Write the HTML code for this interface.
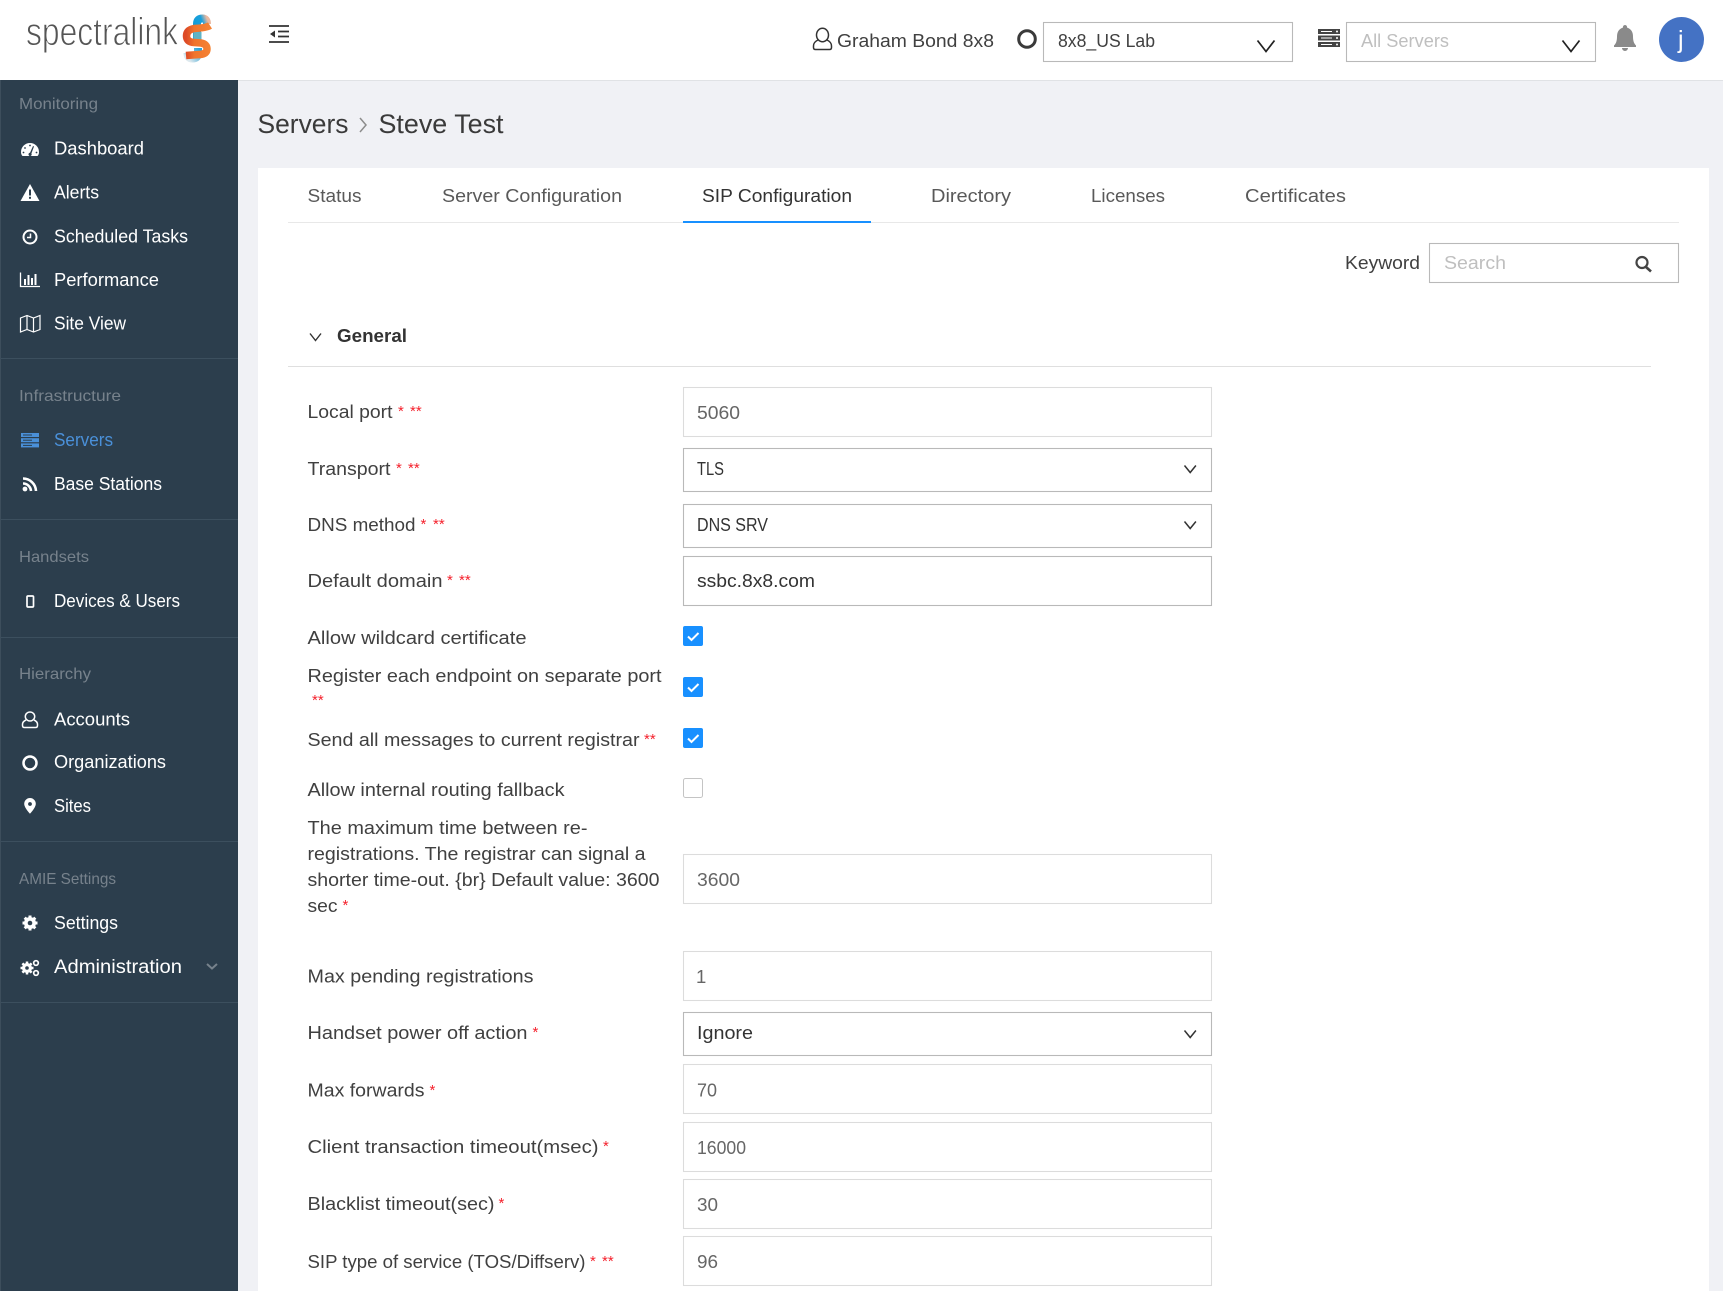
<!DOCTYPE html>
<html lang="en"><head><meta charset="utf-8"><title>Spectralink</title>
<style>
html,body{margin:0;padding:0;background:#f0f1f5;width:1723px;height:1291px;overflow:hidden}
svg{display:block}
text{font-family:"Liberation Sans",sans-serif;font-size:18.5px;fill:#404040}
.n{fill:#fff;font-size:18px}
.h{fill:#77828c;font-size:16px}
.t{fill:#595959;font-size:18.5px}
.v{fill:#666;font-size:18.5px}
.d{fill:#333;font-size:18.5px}
.u{fill:#333;font-size:18px}
.s{fill:#f5222d;font-size:15px}
.b{fill:#fff;stroke:#dcdcdc;stroke-width:1.1}
.c{fill:#fff;stroke:#b9b9b9;stroke-width:1.1}
.l{stroke:#3c4f5e;stroke-width:1}
.ck{fill:#1890ff}
.cv{fill:none;stroke:#333;stroke-width:1.5}
</style></head><body>
<svg width="1723" height="1291" viewBox="0 0 1723 1291" xmlns="http://www.w3.org/2000/svg">
<defs>
<linearGradient id="g1" x1="0" y1="1" x2="1" y2="0"><stop offset="0" stop-color="#0f9ad6"/><stop offset=".7" stop-color="#19a0dc"/><stop offset="1" stop-color="#eab9a0"/></linearGradient>
<linearGradient id="g2" x1="1" y1="0" x2="0" y2="1"><stop offset="0" stop-color="#2aa3d8"/><stop offset=".6" stop-color="#8ec8e2"/><stop offset="1" stop-color="#dde9ee"/></linearGradient>
<linearGradient id="g3" x1="0" y1="0" x2="1" y2="0"><stop offset="0" stop-color="#dd4a26"/><stop offset=".35" stop-color="#f0742c"/><stop offset="1" stop-color="#f58233"/></linearGradient>
</defs>
<rect width="1723" height="1291" fill="#f0f1f5"/>
<!-- header -->
<rect width="1723" height="80" fill="#fff"/>
<rect y="80" width="1723" height="1" fill="#e0e2e5"/>
<!-- logo -->
<text x="26" y="45" textLength="152" lengthAdjust="spacingAndGlyphs" style="font-size:39px;fill:#555;stroke:#fff;stroke-width:.95">spectralink</text>
<g fill="none">
<path d="M197 44 V24 Q197 18.500 202.500 18.500 Q207 18.500 207 24" stroke="url(#g1)" stroke-width="8"/>
<path d="M198 48 V53 Q198 58.500 192.500 58.500 Q187.500 58.500 187.500 53" stroke="url(#g2)" stroke-width="8"/>
<rect x="193.500" y="32" width="8" height="13" fill="#5fb3c4" stroke="none"/>
<path d="M210 25.500 Q206 28 194 28.500 Q186.500 30 186.500 36 Q186.500 42 194 42.500 L201 43 Q207 44 207 49 Q207 54 200 54.500 Q192 55 186 55.500" stroke="url(#g3)" stroke-width="7.500"/>
</g>
<!-- collapse icon -->
<g fill="none" stroke="#333" stroke-width="1.7"><path d="M269 26H289M278 31.500H289M278 36.500H289M269 42H289"/></g><path d="M270 34l5-3.500v7z" fill="#333"/>
<!-- user -->
<g fill="none" stroke="#333" stroke-width="1.500"><ellipse cx="822.500" cy="35" rx="6" ry="6.800"/><path d="M818 40q-4.500 2-4.500 6v1.500q0 2 2 2h14q2 0 2-2v-1.500q0-4-4.500-6"/></g>
<text x="837" y="47" textLength="157" lengthAdjust="spacingAndGlyphs">Graham Bond 8x8</text>
<circle cx="1027" cy="39" r="8.300" fill="none" stroke="#3a3a3a" stroke-width="3"/>
<rect class="c" x="1043.500" y="22.500" width="249" height="39"/>
<text x="1058" y="47" textLength="97" lengthAdjust="spacingAndGlyphs">8x8_US Lab</text>
<path d="M1257.500 40.500l8.500 11 8.500-11" fill="none" stroke="#222" stroke-width="1.700"/>
<g fill="#444"><rect x="1318" y="29" width="22" height="5"/><rect x="1318" y="35.500" width="22" height="5"/><rect x="1318" y="42" width="22" height="5"/></g>
<g fill="#fff"><rect x="1321" y="31" width="11" height="1"/><rect x="1321" y="37.500" width="11" height="1"/><rect x="1321" y="44" width="11" height="1"/><circle cx="1337" cy="31.500" r="1"/><circle cx="1337" cy="38" r="1"/><circle cx="1337" cy="44.500" r="1"/></g>
<rect class="c" x="1346.500" y="22.500" width="249" height="39"/>
<text x="1361" y="47" textLength="88" lengthAdjust="spacingAndGlyphs" style="fill:#bfbfbf">All Servers</text>
<path d="M1562.500 40.500l8.500 11 8.500-11" fill="none" stroke="#222" stroke-width="1.700"/>
<path d="M1625 25a2 2 0 0 1 2 2.500c4 1.300 6 4.500 6 9 0 4.500 1 7 3 9v1.500h-22v-1.500c2-2 3-4.500 3-9 0-4.500 2-7.700 6-9a2 2 0 0 1 2-2.500zM1622 48h6a3 3 0 0 1-6 0z" fill="#8a8a8a"/>
<circle cx="1681.500" cy="39.500" r="22.500" fill="#4472c4"/>
<text x="1678" y="48" style="font-size:25px;fill:#fff">j</text>

<!-- sidebar -->
<rect y="80" width="238" height="1211" fill="#2c3e4d"/>
<rect y="80" width="1" height="1211" fill="#3d4e5c"/>
<text class="h" x="19" y="109" textLength="79" lengthAdjust="spacingAndGlyphs">Monitoring</text>
<text class="n" x="54" y="154.500" textLength="90" lengthAdjust="spacingAndGlyphs">Dashboard</text>
<text class="n" x="54" y="198.500" textLength="45" lengthAdjust="spacingAndGlyphs">Alerts</text>
<text class="n" x="54" y="242.500" textLength="134" lengthAdjust="spacingAndGlyphs">Scheduled Tasks</text>
<text class="n" x="54" y="286" textLength="105" lengthAdjust="spacingAndGlyphs">Performance</text>
<text class="n" x="54" y="329.500" textLength="72" lengthAdjust="spacingAndGlyphs">Site View</text>
<line class="l" x1="1" x2="238" y1="358.500" y2="358.500"/>
<text class="h" x="19" y="401" textLength="102" lengthAdjust="spacingAndGlyphs">Infrastructure</text>
<text class="n" x="54" y="446" textLength="59" lengthAdjust="spacingAndGlyphs" style="fill:#4a90d9">Servers</text>
<text class="n" x="54" y="490" textLength="108" lengthAdjust="spacingAndGlyphs">Base Stations</text>
<line class="l" x1="1" x2="238" y1="519.500" y2="519.500"/>
<text class="h" x="19" y="562" textLength="70" lengthAdjust="spacingAndGlyphs">Handsets</text>
<text class="n" x="54" y="607" textLength="126" lengthAdjust="spacingAndGlyphs">Devices &amp; Users</text>
<line class="l" x1="1" x2="238" y1="637.500" y2="637.500"/>
<text class="h" x="19" y="679" textLength="72" lengthAdjust="spacingAndGlyphs">Hierarchy</text>
<text class="n" x="54" y="725.500" textLength="76" lengthAdjust="spacingAndGlyphs">Accounts</text>
<text class="n" x="54" y="768" textLength="112" lengthAdjust="spacingAndGlyphs">Organizations</text>
<text class="n" x="54" y="812" textLength="37" lengthAdjust="spacingAndGlyphs">Sites</text>
<line class="l" x1="1" x2="238" y1="841.500" y2="841.500"/>
<text class="h" x="19" y="884" textLength="97" lengthAdjust="spacingAndGlyphs">AMIE Settings</text>
<text class="n" x="54" y="929" textLength="64" lengthAdjust="spacingAndGlyphs">Settings</text>
<text class="n" x="54" y="973" textLength="128" lengthAdjust="spacingAndGlyphs" style="font-size:19px">Administration</text>
<path d="M207 964l5 4.500 5-4.500" fill="none" stroke="#77828c" stroke-width="2"/>
<line class="l" x1="1" x2="238" y1="1002.500" y2="1002.500"/>

<!-- sidebar icons -->
<path d="M30 143a9 9 0 0 0-9 9c0 1.800.5 3 1.500 4h15c1-1 1.500-2.200 1.500-4a9 9 0 0 0-9-9z" fill="#fff"/>
<g fill="#2c3e4d"><circle cx="30" cy="145.500" r=".9"/><circle cx="25" cy="148" r=".9"/><circle cx="23.500" cy="152.500" r=".9"/><circle cx="36.500" cy="152.500" r=".9"/><path d="M33 146l1 .5-2.600 7a1.600 1.600 0 1 1-1.400-.7z"/></g>
<path d="M30 184l9.500 17h-19z" fill="#fff"/><rect x="29" y="189.500" width="2" height="6" fill="#2c3e4d"/><rect x="29" y="196.800" width="2" height="2" fill="#2c3e4d"/>
<circle cx="30" cy="237" r="6.500" fill="none" stroke="#fff" stroke-width="2"/><path d="M30.500 233.500V237.500H27" fill="none" stroke="#fff" stroke-width="1.500"/>
<path d="M20.500 272.500V286.500H40" fill="none" stroke="#fff" stroke-width="1.300"/><g fill="#fff"><rect x="24" y="279" width="2" height="6"/><rect x="27.500" y="275" width="2" height="10"/><rect x="31" y="278" width="2" height="7"/><rect x="34.500" y="274" width="2" height="11"/></g>
<path d="M20.500 318l6.500-2.500 6.500 2.500 6.500-2.500v14l-6.500 2.500-6.500-2.500-6.500 2.500zM27 315.500v14M33.500 318v14" fill="none" stroke="#fff" stroke-width="1.200"/>
<g fill="#4a90d9"><rect x="21" y="433" width="18" height="4"/><rect x="21" y="438.200" width="18" height="4"/><rect x="21" y="443.400" width="18" height="4"/></g>
<g fill="#2c3e4d"><rect x="23" y="434.500" width="9" height="1"/><rect x="23" y="439.700" width="9" height="1"/><rect x="23" y="444.900" width="9" height="1"/></g>
<g fill="none" stroke="#fff" stroke-width="2.600"><path d="M23 478.500a13 13 0 0 1 13 12.500"/><path d="M23 483.500a8 8 0 0 1 8 7.500"/></g><circle cx="25" cy="489" r="2.400" fill="#fff"/>
<rect x="27" y="596" width="6.500" height="11" rx="1" fill="none" stroke="#fff" stroke-width="1.700"/>
<g fill="none" stroke="#fff" stroke-width="1.500"><ellipse cx="30" cy="716.500" rx="4.700" ry="4.500"/><path d="M26 720q-3.500 1.500-3.500 4.500v1q0 2 2 2h11q2 0 2-2v-1q0-3-3.500-4.500"/></g>
<circle cx="30" cy="763" r="6.500" fill="none" stroke="#fff" stroke-width="2.500"/>
<path d="M30 798a5.800 5.800 0 0 0-5.800 5.800c0 4 5.800 10 5.800 10s5.800-6 5.800-10a5.800 5.800 0 0 0-5.800-5.800z" fill="#fff"/><circle cx="30" cy="804" r="1.900" fill="#2c3e4d"/>
<g fill="#fff"><circle cx="30" cy="923" r="6"/><g stroke="#fff" stroke-width="3"><path d="M30 915.500v15M22.500 923h15M24.700 917.700l10.600 10.600M35.300 917.700l-10.600 10.600"/></g></g><circle cx="30" cy="923" r="2.300" fill="#2c3e4d"/>
<circle cx="27" cy="968" r="5" fill="#fff"/><g stroke="#fff" stroke-width="2.500"><path d="M27 961.500v13M20.500 968h13M22.400 963.400l9.200 9.200M31.600 963.400l-9.200 9.200"/></g><circle cx="27" cy="968" r="1.800" fill="#2c3e4d"/>
<circle cx="36" cy="963" r="2.300" fill="none" stroke="#fff" stroke-width="1.700"/><circle cx="36" cy="973" r="2.300" fill="none" stroke="#fff" stroke-width="1.700"/>

<!-- breadcrumb -->
<text x="257.500" y="133" textLength="91" lengthAdjust="spacingAndGlyphs" style="font-size:27px;fill:#3a3a3a">Servers</text>
<path d="M360 118l6 7-6 7" fill="none" stroke="#8c8c8c" stroke-width="1.500"/>
<text x="378.500" y="133" textLength="125" lengthAdjust="spacingAndGlyphs" style="font-size:27px;fill:#3a3a3a">Steve Test</text>

<!-- card -->
<rect x="258" y="168" width="1451" height="1123" fill="#fff"/>
<text class="t" x="307.500" y="202" textLength="54" lengthAdjust="spacingAndGlyphs">Status</text>
<text class="t" x="442" y="202" textLength="180" lengthAdjust="spacingAndGlyphs">Server Configuration</text>
<text class="d" x="702" y="202" textLength="150" lengthAdjust="spacingAndGlyphs">SIP Configuration</text>
<text class="t" x="931" y="202" textLength="80" lengthAdjust="spacingAndGlyphs">Directory</text>
<text class="t" x="1091" y="202" textLength="74" lengthAdjust="spacingAndGlyphs">Licenses</text>
<text class="t" x="1245" y="202" textLength="101" lengthAdjust="spacingAndGlyphs">Certificates</text>
<rect x="288" y="222" width="1391" height="1" fill="#e8e8e8"/>
<rect x="683" y="221" width="188" height="2" fill="#1890ff"/>
<text x="1345" y="269" textLength="75" lengthAdjust="spacingAndGlyphs">Keyword</text>
<rect class="c" x="1429.500" y="243.500" width="249" height="39"/>
<text x="1444" y="269" textLength="62" lengthAdjust="spacingAndGlyphs" style="fill:#bfbfbf">Search</text>
<circle cx="1642" cy="262.500" r="5.500" fill="none" stroke="#444" stroke-width="2.200"/><path d="M1646 267l5 4.500" stroke="#444" stroke-width="2.600"/>
<path d="M310 333.500l5.500 7 5.500-7" fill="none" stroke="#333" stroke-width="1.400"/>
<text x="337" y="342" textLength="70" lengthAdjust="spacingAndGlyphs" style="font-weight:bold;fill:#333;font-size:18px">General</text>
<rect x="288" y="366" width="1363" height="1" fill="#dfdfdf"/>

<!-- labels -->
<text x="307.500" y="418" textLength="85" lengthAdjust="spacingAndGlyphs">Local port</text>
<text class="s" x="398" y="416">*</text><text class="s" x="410" y="416">**</text>
<text x="307.500" y="475" textLength="83" lengthAdjust="spacingAndGlyphs">Transport</text>
<text class="s" x="396" y="473">*</text><text class="s" x="408" y="473">**</text>
<text x="307.500" y="531" textLength="108" lengthAdjust="spacingAndGlyphs">DNS method</text>
<text class="s" x="420.500" y="529">*</text><text class="s" x="433" y="529">**</text>
<text x="307.500" y="587" textLength="135" lengthAdjust="spacingAndGlyphs">Default domain</text>
<text class="s" x="447" y="585">*</text><text class="s" x="459" y="585">**</text>
<text x="307.500" y="644" textLength="219" lengthAdjust="spacingAndGlyphs">Allow wildcard certificate</text>
<text x="307.500" y="682" textLength="354" lengthAdjust="spacingAndGlyphs">Register each endpoint on separate port</text>
<text class="s" x="312" y="705">**</text>
<text x="307.500" y="746" textLength="332" lengthAdjust="spacingAndGlyphs">Send all messages to current registrar</text>
<text class="s" x="644" y="744">**</text>
<text x="307.500" y="796" textLength="257" lengthAdjust="spacingAndGlyphs">Allow internal routing fallback</text>
<text x="307.500" y="834" textLength="280" lengthAdjust="spacingAndGlyphs">The maximum time between re-</text>
<text x="307.500" y="860" textLength="338" lengthAdjust="spacingAndGlyphs">registrations. The registrar can signal a</text>
<text x="307.500" y="886" textLength="352" lengthAdjust="spacingAndGlyphs">shorter time-out. {br} Default value: 3600</text>
<text x="307.500" y="912" textLength="30" lengthAdjust="spacingAndGlyphs">sec</text>
<text class="s" x="342.500" y="910">*</text>
<text x="307.500" y="982.500" textLength="226" lengthAdjust="spacingAndGlyphs">Max pending registrations</text>
<text x="307.500" y="1039" textLength="220" lengthAdjust="spacingAndGlyphs">Handset power off action</text>
<text class="s" x="532.500" y="1037">*</text>
<text x="307.500" y="1096.500" textLength="117" lengthAdjust="spacingAndGlyphs">Max forwards</text>
<text class="s" x="429.500" y="1095">*</text>
<text x="307.500" y="1153" textLength="291" lengthAdjust="spacingAndGlyphs">Client transaction timeout(msec)</text>
<text class="s" x="603" y="1151">*</text>
<text x="307.500" y="1210" textLength="187" lengthAdjust="spacingAndGlyphs">Blacklist timeout(sec)</text>
<text class="s" x="498.500" y="1208">*</text>
<text x="307.500" y="1268" textLength="278" lengthAdjust="spacingAndGlyphs">SIP type of service (TOS/Diffserv)</text>
<text class="s" x="590" y="1266">*</text><text class="s" x="602" y="1266">**</text>

<!-- fields -->
<rect class="b" x="683.500" y="387.500" width="528" height="49"/>
<text class="v" x="697" y="419" textLength="43" lengthAdjust="spacingAndGlyphs">5060</text>
<rect class="c" x="683.500" y="448.500" width="528" height="43"/>
<text class="u" x="697" y="475" textLength="27" lengthAdjust="spacingAndGlyphs">TLS</text>
<path class="cv" d="M1184.500 465.500l5.700 7 5.700-7"/>
<rect class="c" x="683.500" y="504.500" width="528" height="43"/>
<text class="u" x="697" y="531" textLength="71" lengthAdjust="spacingAndGlyphs">DNS SRV</text>
<path class="cv" d="M1184.500 521.500l5.700 7 5.700-7"/>
<rect class="c" x="683.500" y="556.500" width="528" height="49"/>
<text class="d" x="697" y="587" textLength="118" lengthAdjust="spacingAndGlyphs">ssbc.8x8.com</text>

<rect class="ck" x="683" y="626" width="20" height="20" rx="2"/><path d="M688 636.500l3.500 3.500 7-7" fill="none" stroke="#fff" stroke-width="2"/>
<rect class="ck" x="683" y="677" width="20" height="20" rx="2"/><path d="M688 687.500l3.500 3.500 7-7" fill="none" stroke="#fff" stroke-width="2"/>
<rect class="ck" x="683" y="728" width="20" height="20" rx="2"/><path d="M688 738.500l3.500 3.500 7-7" fill="none" stroke="#fff" stroke-width="2"/>
<rect x="683.500" y="778.500" width="19" height="19" rx="2" fill="#fff" stroke="#c4c4c4"/>

<rect class="b" x="683.500" y="854.500" width="528" height="49"/>
<text class="v" x="697" y="886" textLength="43" lengthAdjust="spacingAndGlyphs">3600</text>
<rect class="b" x="683.500" y="951.500" width="528" height="49"/>
<text class="v" x="696" y="983">1</text>
<rect class="c" x="683.500" y="1012.500" width="528" height="43"/>
<text class="d" x="697" y="1039" textLength="56" lengthAdjust="spacingAndGlyphs">Ignore</text>
<path class="cv" d="M1184.500 1030.500l5.700 7 5.700-7"/>
<rect class="b" x="683.500" y="1064.500" width="528" height="49"/>
<text class="v" x="697" y="1096.500" textLength="20" lengthAdjust="spacingAndGlyphs">70</text>
<rect class="b" x="683.500" y="1122.500" width="528" height="49"/>
<text class="v" x="697" y="1154" textLength="49" lengthAdjust="spacingAndGlyphs">16000</text>
<rect class="b" x="683.500" y="1179.500" width="528" height="49"/>
<text class="v" x="697" y="1211" textLength="21" lengthAdjust="spacingAndGlyphs">30</text>
<rect class="b" x="683.500" y="1236.500" width="528" height="49"/>
<text class="v" x="697" y="1268" textLength="21" lengthAdjust="spacingAndGlyphs">96</text>
</svg>
</body></html>
